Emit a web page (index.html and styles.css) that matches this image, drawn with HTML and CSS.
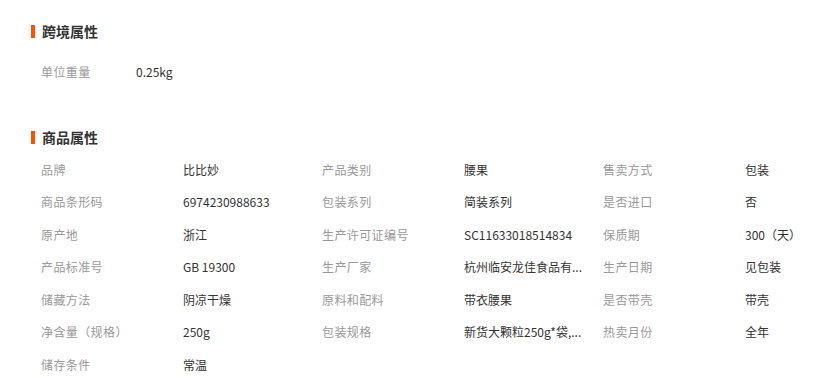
FILE: index.html
```html
<!DOCTYPE html>
<html lang="zh-CN">
<head>
<meta charset="utf-8">
<link rel="stylesheet" href="styles.css">
</head>
<body>
<div class="page">
  <section class="sec sec-first">
    <h2 class="title">跨境属性</h2>
    <div class="kv-simple">
      <span class="label">单位重量</span>
      <span class="value">0.25kg</span>
    </div>
  </section>
  <section class="sec sec-second">
    <h2 class="title">商品属性</h2>
    <div class="grid">
      <span class="label">品牌</span><span class="value">比比妙</span>
      <span class="label">产品类别</span><span class="value">腰果</span>
      <span class="label">售卖方式</span><span class="value">包装</span>

      <span class="label">商品条形码</span><span class="value">6974230988633</span>
      <span class="label">包装系列</span><span class="value">简装系列</span>
      <span class="label">是否进口</span><span class="value">否</span>

      <span class="label">原产地</span><span class="value">浙江</span>
      <span class="label">生产许可证编号</span><span class="value">SC11633018514834</span>
      <span class="label">保质期</span><span class="value">300（天）</span>

      <span class="label">产品标准号</span><span class="value">GB 19300</span>
      <span class="label">生产厂家</span><span class="value">杭州临安龙佳食品有...</span>
      <span class="label">生产日期</span><span class="value">见包装</span>

      <span class="label">储藏方法</span><span class="value">阴凉干燥</span>
      <span class="label">原料和配料</span><span class="value">带衣腰果</span>
      <span class="label">是否带壳</span><span class="value">带壳</span>

      <span class="label">净含量（规格）</span><span class="value">250g</span>
      <span class="label">包装规格</span><span class="value">新货大颗粒250g*袋,...</span>
      <span class="label">热卖月份</span><span class="value">全年</span>

      <span class="label">储存条件</span><span class="value">常温</span>
    </div>
  </section>
</div>
</body>
</html>
```
FILE: styles.css
```css
* { box-sizing: border-box; }
html, body {
  margin: 0;
  padding: 0;
  background: #fff;
}
body {
  font-family: "Noto Sans CJK SC", "Noto Sans", sans-serif;
  font-size: 12px;
  color: #333;
}
.page {
  padding: 21px 0 0 31px;
}
.sec-second {
  margin-top: 40px;
}
.title {
  margin: 0;
  display: flex;
  align-items: center;
  gap: 7px;
  height: 20px;
  font-size: 14px;
  font-weight: bold;
  color: #333;
  line-height: 20px;
}
.title::before {
  content: "";
  width: 4px;
  height: 13px;
  background: #ff5000;
}
.kv-simple {
  margin-top: 14px;
  padding-left: 10px;
  display: flex;
  height: 32px;
  align-items: center;
}
.kv-simple .label {
  width: 95px;
}
.grid {
  margin-top: 6px;
  padding-left: 10px;
  display: grid;
  grid-template-columns: 142px 139px 142px 139px 142px 1fr;
  grid-auto-rows: 32.5px;
  align-items: center;
}
.label {
  color: #999;
  white-space: nowrap;
  letter-spacing: 0.4px;
}
.value {
  color: #333;
  white-space: nowrap;
}
```
